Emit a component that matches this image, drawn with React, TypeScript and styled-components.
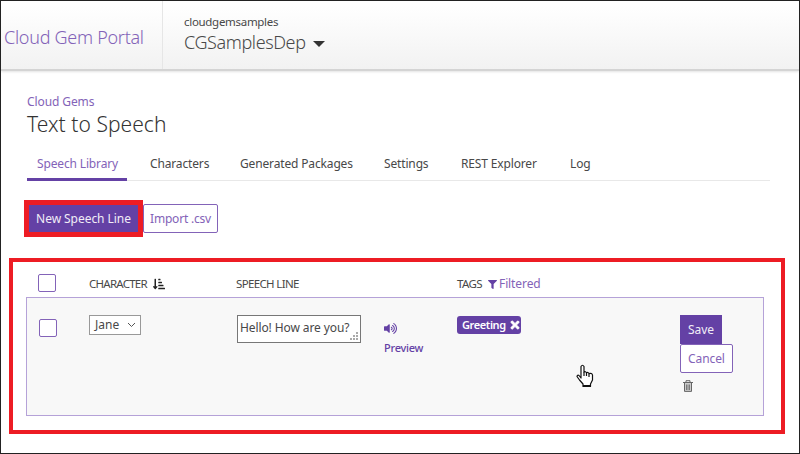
import React from "react";
import styled, { createGlobalStyle } from "styled-components";
import { FaFilter, FaSortAmountDownAlt, FaTimes, FaVolumeUp } from "react-icons/fa";

const purple = "#6441a5";
const lilac = "#8363b8";

const GlobalStyle = createGlobalStyle`
  * { box-sizing: border-box; }
  body { margin: 0; background: #fff; }
`;

const Page = styled.div`
  width: 800px;
  height: 454px;
  overflow: hidden;
  border: 1px solid #222;
  background: #fff;
  color: #484848;
  font: 400 12px/16px "Noto Sans", "Open Sans", sans-serif;
  white-space: nowrap;
`;

const Header = styled.header`
  display: flex;
  height: 70px;
  background: linear-gradient(#fff 5%, #f2f2f2);
  border-bottom: 2px solid #d4d4d4;
  box-shadow: 0 1px 2px #e4e4e4;
`;

const Brand = styled.div`
  width: 162px;
  padding: 22px 0 0 3px;
  border-right: 1px solid #e6e6e6;
  color: ${lilac};
  font-size: 18px;
  font-weight: 300;
  line-height: 28px;
`;

const Project = styled.div`
  padding: 13px 0 0 21px;
`;

const Label = styled.span<{ $track?: number }>`
  letter-spacing: ${(p) => p.$track ?? 0}px;
`;

const Stack = styled.div`
  font-size: 11.5px;
`;

const Deployment = styled.div`
  display: flex;
  align-items: center;
  gap: 7px;
  font-size: 18px;
  font-weight: 300;
  line-height: 24px;
`;

const Caret = styled.span`
  margin-top: 3px;
  border: 6px solid transparent;
  border-top-color: #333;
  border-bottom: 0;
`;

const Content = styled.main`
  padding: 23px 14px 0 8px;
`;

const Titles = styled.div`
  padding-left: 18px;
`;

const Crumb = styled.div`
  color: ${lilac};
`;

const Title = styled.h1`
  margin: 0;
  color: #333;
  font-size: 21px;
  font-weight: 300;
  line-height: 28px;
`;

const Tabs = styled.nav`
  display: flex;
  height: 37px;
  margin: 6px 15px 0 18px;
  border-bottom: 1px solid #e8e8e8;
`;

const Tab = styled.a<{ $width: number; $active?: boolean }>`
  width: ${(p) => p.$width}px;
  height: 37px;
  padding: 12px 0 0 10px;
  color: ${(p) => (p.$active ? lilac : "#484848")};
  border-bottom: ${(p) => (p.$active ? `3px solid ${purple}` : "0")};
  margin-right: ${(p) => (p.$active ? 13 : 0)}px;
`;

const Actions = styled.div`
  display: flex;
  align-items: center;
  height: 37px;
  margin: 19px 0 0 15px;
`;

const Highlight = styled.div`
  width: 119px;
  height: 37px;
  border: 5px solid #ed1c24;
`;

const Button = styled.button<{ $primary?: boolean; $width: number; $height?: number }>`
  display: block;
  width: ${(p) => p.$width}px;
  height: ${(p) => p.$height ?? 29}px;
  padding: 0;
  border: 1px solid ${(p) => (p.$primary ? purple : lilac)};
  border-radius: ${(p) => (p.$primary ? 0 : 2)}px;
  background: ${(p) => (p.$primary ? purple : "#fff")};
  color: ${(p) => (p.$primary ? "#f1edf7" : lilac)};
  font: inherit;
`;

const Library = styled.section`
  height: 176px;
  margin-top: 21px;
  padding: 11px 17px 0 13px;
  border: 4px solid #ed1c24;
`;

const HeadRow = styled.div`
  display: grid;
  grid-template-columns: 63px 147px 221px 1fr;
  height: 24px;
  font-size: 11.5px;
`;

const HeadCell = styled.div`
  display: flex;
  align-items: center;
  height: 22px;
  gap: 6px;
`;

const Filter = styled.span`
  display: flex;
  align-items: center;
  gap: 2px;
  color: ${lilac};
  font-size: 12px;
  svg { color: ${purple}; }
`;

const Checkbox = styled.div`
  width: 18px;
  height: 18px;
  border: 1px solid ${lilac};
  border-radius: 2px;
  background: #fff;
`;

const CheckSlot = styled.div<{ $top: number; $left: number }>`
  padding: ${(p) => p.$top}px 0 0 ${(p) => p.$left}px;
`;

const Entry = styled.div`
  display: grid;
  grid-template-columns: 62px 148px 147px 73px 223px 1fr;
  height: 119px;
  padding-top: 17px;
  border: 1px solid #b5a2d8;
  background: #f8f8f8;
`;

const Select = styled.div`
  display: flex;
  align-items: center;
  justify-content: space-between;
  width: 52px;
  height: 20px;
  padding: 0 4px 0 5px;
  border: 1px solid #999;
  background: #fff;
`;

const TextArea = styled.div`
  display: flex;
  justify-content: space-between;
  width: 124px;
  height: 28px;
  padding: 4px 1px 0 2px;
  border: 1px solid #777;
  background: #fff;
`;

const Grip = styled.svg`
  flex: none;
  margin: 11px 0 0 -8px;
`;

const Preview = styled.div`
  padding-top: 7px;
  color: ${purple};
  font-size: 11px;
  font-weight: 500;
  svg { display: block; margin-bottom: 5px; }
`;

const Tag = styled.span`
  display: flex;
  align-items: center;
  gap: 3px;
  width: 64px;
  height: 18px;
  margin-top: 1px;
  padding-left: 5px;
  border-radius: 3px;
  background: ${purple};
  color: #fff;
  font-size: 11px;
  font-weight: 600;
`;

const Pointer = styled.svg`
  display: block;
  margin: 30px 0 0 119px;
`;

const Trash = styled.svg`
  display: block;
  margin: 7px 0 0 3px;
`;

const tabs = [
  { name: "Speech Library", width: 100 },
  { name: "Characters", width: 90 },
  { name: "Generated Packages", width: 144 },
  { name: "Settings", width: 77 },
  { name: "REST Explorer", width: 109 },
  { name: "Log", width: 60 },
];

export default function App() {
  return (
    <>
      <GlobalStyle />
      <Page>
        <Header>
          <Brand><Label $track={-0.28}>Cloud Gem Portal</Label></Brand>
          <Project>
            <Stack><Label $track={-0.3}>cloudgemsamples</Label></Stack>
            <Deployment><Label $track={-0.4}>CGSamplesDep</Label><Caret /></Deployment>
          </Project>
        </Header>
        <Content>
          <Titles>
            <Crumb><Label $track={-0.1}>Cloud Gems</Label></Crumb>
            <Title><Label $track={0.05}>Text to Speech</Label></Title>
          </Titles>
          <Tabs>
            {tabs.map((tab, i) => (
              <Tab key={tab.name} $width={tab.width} $active={i === 0}>
                <Label $track={-0.15}>{tab.name}</Label>
              </Tab>
            ))}
          </Tabs>
          <Actions>
            <Highlight><Button $primary $width={109} $height={27}><Label $track={-0.05}>New Speech Line</Label></Button></Highlight>
            <Button $width={75}><Label $track={-0.2}>Import .csv</Label></Button>
          </Actions>
          <Library>
            <HeadRow>
              <CheckSlot $top={1} $left={12}><Checkbox /></CheckSlot>
              <HeadCell><Label $track={-0.75}>CHARACTER</Label><FaSortAmountDownAlt size={12} color="#222" /></HeadCell>
              <HeadCell><Label $track={-0.65}>SPEECH LINE</Label></HeadCell>
              <HeadCell>
                <Label $track={-0.6}>TAGS</Label>
                <Filter><FaFilter size={9} /><Label $track={-0.1}>Filtered</Label></Filter>
              </HeadCell>
            </HeadRow>
            <Entry>
              <CheckSlot $top={4} $left={12}><Checkbox /></CheckSlot>
              <div>
                <Select>
                  <Label>Jane</Label>
                  <svg width="9" height="6" viewBox="0 0 9 6" fill="none" stroke="#555"><path d="M1 1l3.5 3.5L8 1" /></svg>
                </Select>
              </div>
              <div>
                <TextArea>
                  <Label $track={-0.1}>Hello! How are you?</Label>
                  <Grip width="10" height="10" viewBox="0 0 10 10" fill="#aaa">
                    <path d="M7 1h2v2H7zM4 4h2v2H4zM7 4h2v2H7zM1 7h2v2H1zM4 7h2v2H4zM7 7h2v2H7z" />
                  </Grip>
                </TextArea>
              </div>
              <Preview><FaVolumeUp size={13} /><Label $track={-0.25}>Preview</Label></Preview>
              <div>
                <Tag><Label $track={-0.4}>Greeting</Label><FaTimes size={12} stroke="#fff" strokeWidth={30} /></Tag>
                <Pointer width="18" height="24" viewBox="0 0 18 24" fill="#fff" stroke="#111" strokeWidth="1.2" strokeLinejoin="round">
                  <path d="M5 14V2.5Q6.5 0 8 2.5V8q1.5-1 2.5.8 1.5-1 2.5.8 3-1 3.5 1.4V16l-2 4v2.500H7V20L3.500 16 1 12.500q.5-2 2-1z" />
                  <path d="M8 8v4M10.500 9v3M13 10v3" />
                  <path d="M7 22h7" strokeWidth="2" />
                </Pointer>
              </div>
              <div>
                <Button $primary $width={42}><Label>Save</Label></Button>
                <Button $width={53}><Label $track={-0.1}>Cancel</Label></Button>
                <Trash width="10" height="12" viewBox="0 0 10 12" fill="none" stroke="#666">
                  <path d="M0 2.500h10M3 2V.7h4V2" />
                  <path d="M1.500 3v8.400h7V3" fill="#ccc" />
                  <path d="M3.500 4.500v5.500M5 4.500v5.500M6.500 4.500v5.500" strokeWidth=".8" />
                </Trash>
              </div>
            </Entry>
          </Library>
        </Content>
      </Page>
    </>
  );
}
